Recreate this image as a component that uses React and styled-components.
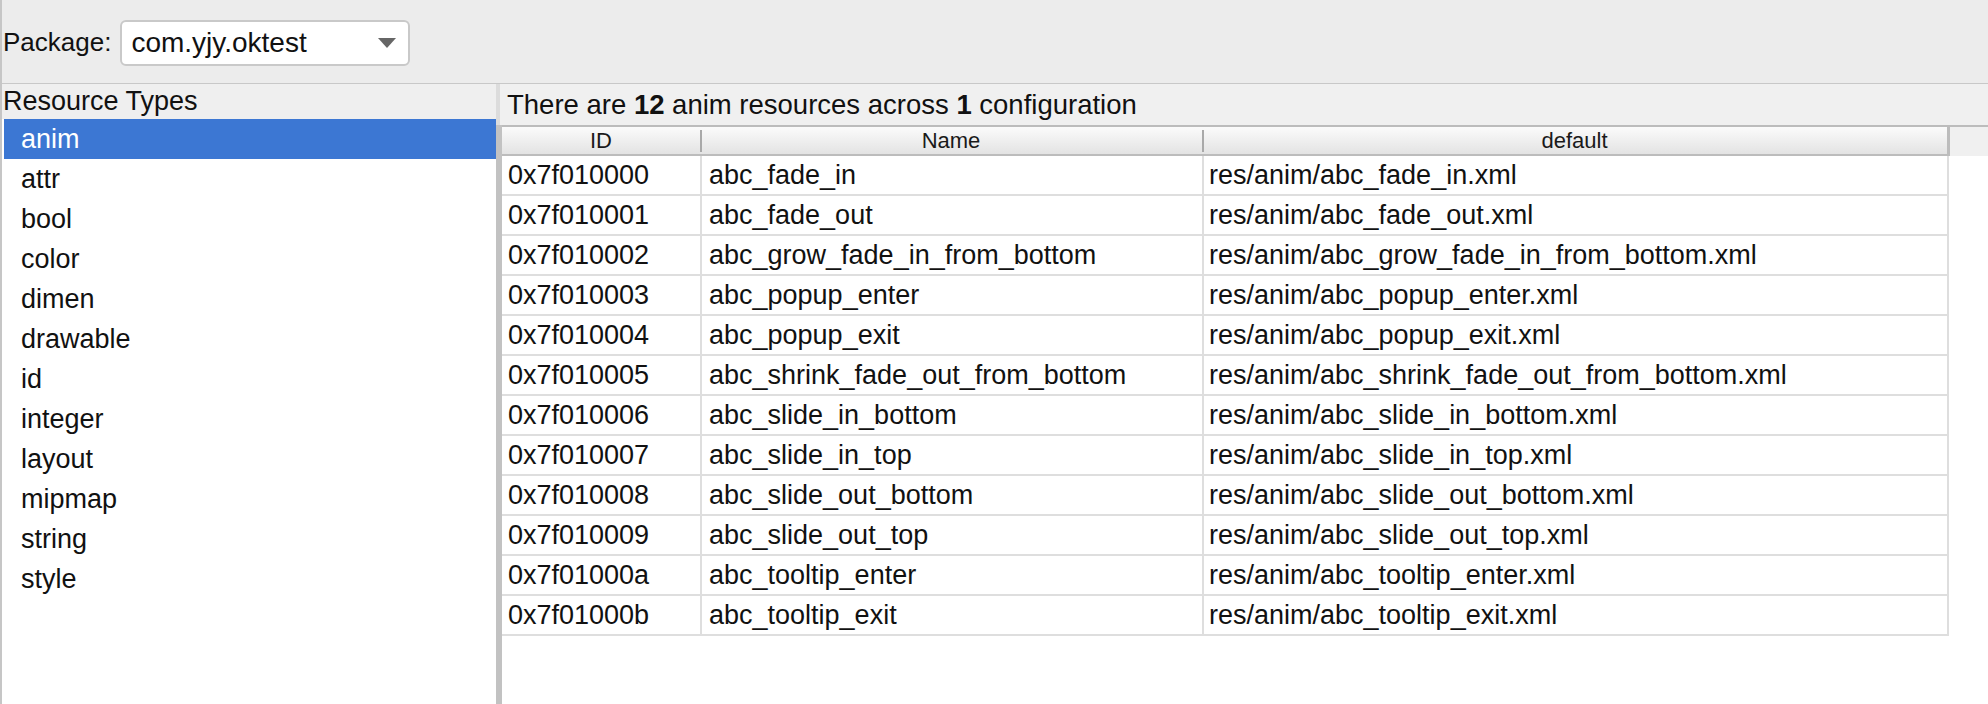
import React, { useState } from "react";
import { styled, createGlobalStyle } from "styled-components";

const GlobalStyle = createGlobalStyle`
  html, body {
    margin: 0;
    padding: 0;
  }
  body {
    font-family: "Liberation Sans", Arial, sans-serif;
    background: #ececec;
    color: #111;
  }
`;

const Page = styled.div`
  height: 704px;
  display: flex;
  flex-direction: column;
  border-left: 2px solid #c6c6c6;
  box-sizing: border-box;
  overflow: hidden;
`;

const TopBar = styled.div`
  height: 84px;
  flex: none;
  display: flex;
  align-items: center;
  gap: 9px;
  padding: 2px 0 0 1px;
  box-sizing: border-box;
  background: #ececec;
  border-bottom: 1px solid #c8c8c8;
`;

const Label = styled.span`
  font-size: 26px;
  color: #111;
`;

const Combo = styled.div`
  width: 290px;
  height: 46px;
  box-sizing: border-box;
  border: 2px solid #c9c9c9;
  border-radius: 6px;
  background: #fff;
  display: flex;
  align-items: center;
  justify-content: space-between;
  padding: 0 12px 0 9px;
  font-size: 28px;
  color: #111;
`;

const Main = styled.div`
  flex: 1;
  display: flex;
  min-height: 0;
`;

const LeftPanel = styled.div`
  width: 494px;
  flex: none;
  display: flex;
  flex-direction: column;
`;

const PanelTitle = styled.div`
  height: 35px;
  flex: none;
  display: flex;
  align-items: center;
  padding-left: 1px;
  font-size: 27px;
  background: #efefef;
`;

const TypeList = styled.ul`
  flex: 1;
  list-style: none;
  margin: 0;
  padding: 0 0 0 2px;
  background: #fff;
`;

const TypeItem = styled.li`
  height: 40px;
  display: flex;
  align-items: center;
  padding-left: 17px;
  font-size: 27px;
  color: ${(p) => (p.$selected ? "#fff" : "#111")};
  background: ${(p) => (p.$selected ? "#3c77d3" : "transparent")};
  cursor: default;
`;

const Splitter = styled.div`
  width: 4px;
  flex: none;
  background: linear-gradient(to bottom, #dcdcdc 0, #dcdcdc 41px, #c2c2c2 41px);
`;

const RightPanel = styled.div`
  flex: 1;
  display: flex;
  flex-direction: column;
  background: #fff;
  min-width: 0;
`;

const Caption = styled.div`
  height: 41px;
  flex: none;
  display: flex;
  align-items: center;
  padding-left: 7px;
  font-size: 27.5px;
  background: #f0f0f0;

  b {
    font-weight: 700;
  }
`;

const TableWrap = styled.div`
  flex: 1;
  display: flex;
  flex-direction: column;
  border-left: 2px solid #c2c2c2;
`;

const HeaderRow = styled.div`
  height: 29px;
  flex: none;
  display: flex;
  border-top: 2px solid #bcbcbc;
  background: #f0f0f0;
`;

const HeadCells = styled.div`
  display: flex;
  border-bottom: 2px solid #bcbcbc;
  border-right: 3px solid #bcbcbc;
  background: linear-gradient(to bottom, #fbfbfb, #e3e3e3);
`;

const HeadCell = styled.div`
  position: relative;
  width: ${(p) => p.$w}px;
  display: flex;
  align-items: center;
  justify-content: center;
  font-size: 22px;
  color: #1a1a1a;

  &::before {
    content: "";
    display: ${(p) => (p.$first ? "none" : "block")};
    position: absolute;
    left: 0;
    top: 3px;
    bottom: 2px;
    width: 2px;
    background: #a9a9a9;
  }
`;

const Row = styled.div`
  display: flex;
  height: 40px;
  width: fit-content;
  box-sizing: border-box;
  border-bottom: 2px solid #dedede;
  border-right: 2px solid #dedede;
`;

const Cell = styled.div`
  width: ${(p) => p.$w}px;
  box-sizing: border-box;
  display: flex;
  align-items: center;
  padding-left: ${(p) => p.$pad}px;
  font-size: 27px;
  color: #111;
  white-space: nowrap;
  border-left: ${(p) => (p.$first ? "none" : "2px solid #dedede")};
`;

const columns = [
  { key: "id", title: "ID", w: 198, pad: 6 },
  { key: "name", title: "Name", w: 502, pad: 7 },
  { key: "path", title: "default", w: 745, pad: 5 },
];

const types = [
  "anim", "attr", "bool", "color", "dimen", "drawable", "id",
  "integer", "layout", "mipmap", "string", "style",
];

const names = [
  "abc_fade_in",
  "abc_fade_out",
  "abc_grow_fade_in_from_bottom",
  "abc_popup_enter",
  "abc_popup_exit",
  "abc_shrink_fade_out_from_bottom",
  "abc_slide_in_bottom",
  "abc_slide_in_top",
  "abc_slide_out_bottom",
  "abc_slide_out_top",
  "abc_tooltip_enter",
  "abc_tooltip_exit",
];

const rows = names.map((name, i) => ({
  id: "0x7f0100" + i.toString(16).padStart(2, "0"),
  name,
  path: `res/anim/${name}.xml`,
}));

function Arrow() {
  return (
    <svg width="18" height="10" viewBox="0 0 18 10">
      <path d="M0 0 H18 L9 10 Z" fill="#666" />
    </svg>
  );
}

export default function App() {
  const [selected, setSelected] = useState("anim");

  return (
    <>
      <GlobalStyle />
      <Page>
        <TopBar>
          <Label>Package:</Label>
          <Combo>
            <span>com.yjy.oktest</span>
            <Arrow />
          </Combo>
        </TopBar>
        <Main>
          <LeftPanel>
            <PanelTitle>Resource Types</PanelTitle>
            <TypeList>
              {types.map((t) => (
                <TypeItem
                  key={t}
                  $selected={t === selected}
                  onClick={() => setSelected(t)}
                >
                  {t}
                </TypeItem>
              ))}
            </TypeList>
          </LeftPanel>
          <Splitter />
          <RightPanel>
            <Caption>
              There are&nbsp;<b>12</b>&nbsp;anim resources across&nbsp;<b>1</b>&nbsp;configuration
            </Caption>
            <TableWrap>
              <HeaderRow>
                <HeadCells>
                  {columns.map((c, i) => (
                    <HeadCell key={c.key} $w={c.w} $first={i === 0}>
                      {c.title}
                    </HeadCell>
                  ))}
                </HeadCells>
              </HeaderRow>
              {rows.map((r) => (
                <Row key={r.id}>
                  {columns.map((c, i) => (
                    <Cell key={c.key} $w={c.w} $pad={c.pad} $first={i === 0}>
                      {r[c.key]}
                    </Cell>
                  ))}
                </Row>
              ))}
            </TableWrap>
          </RightPanel>
        </Main>
      </Page>
    </>
  );
}
